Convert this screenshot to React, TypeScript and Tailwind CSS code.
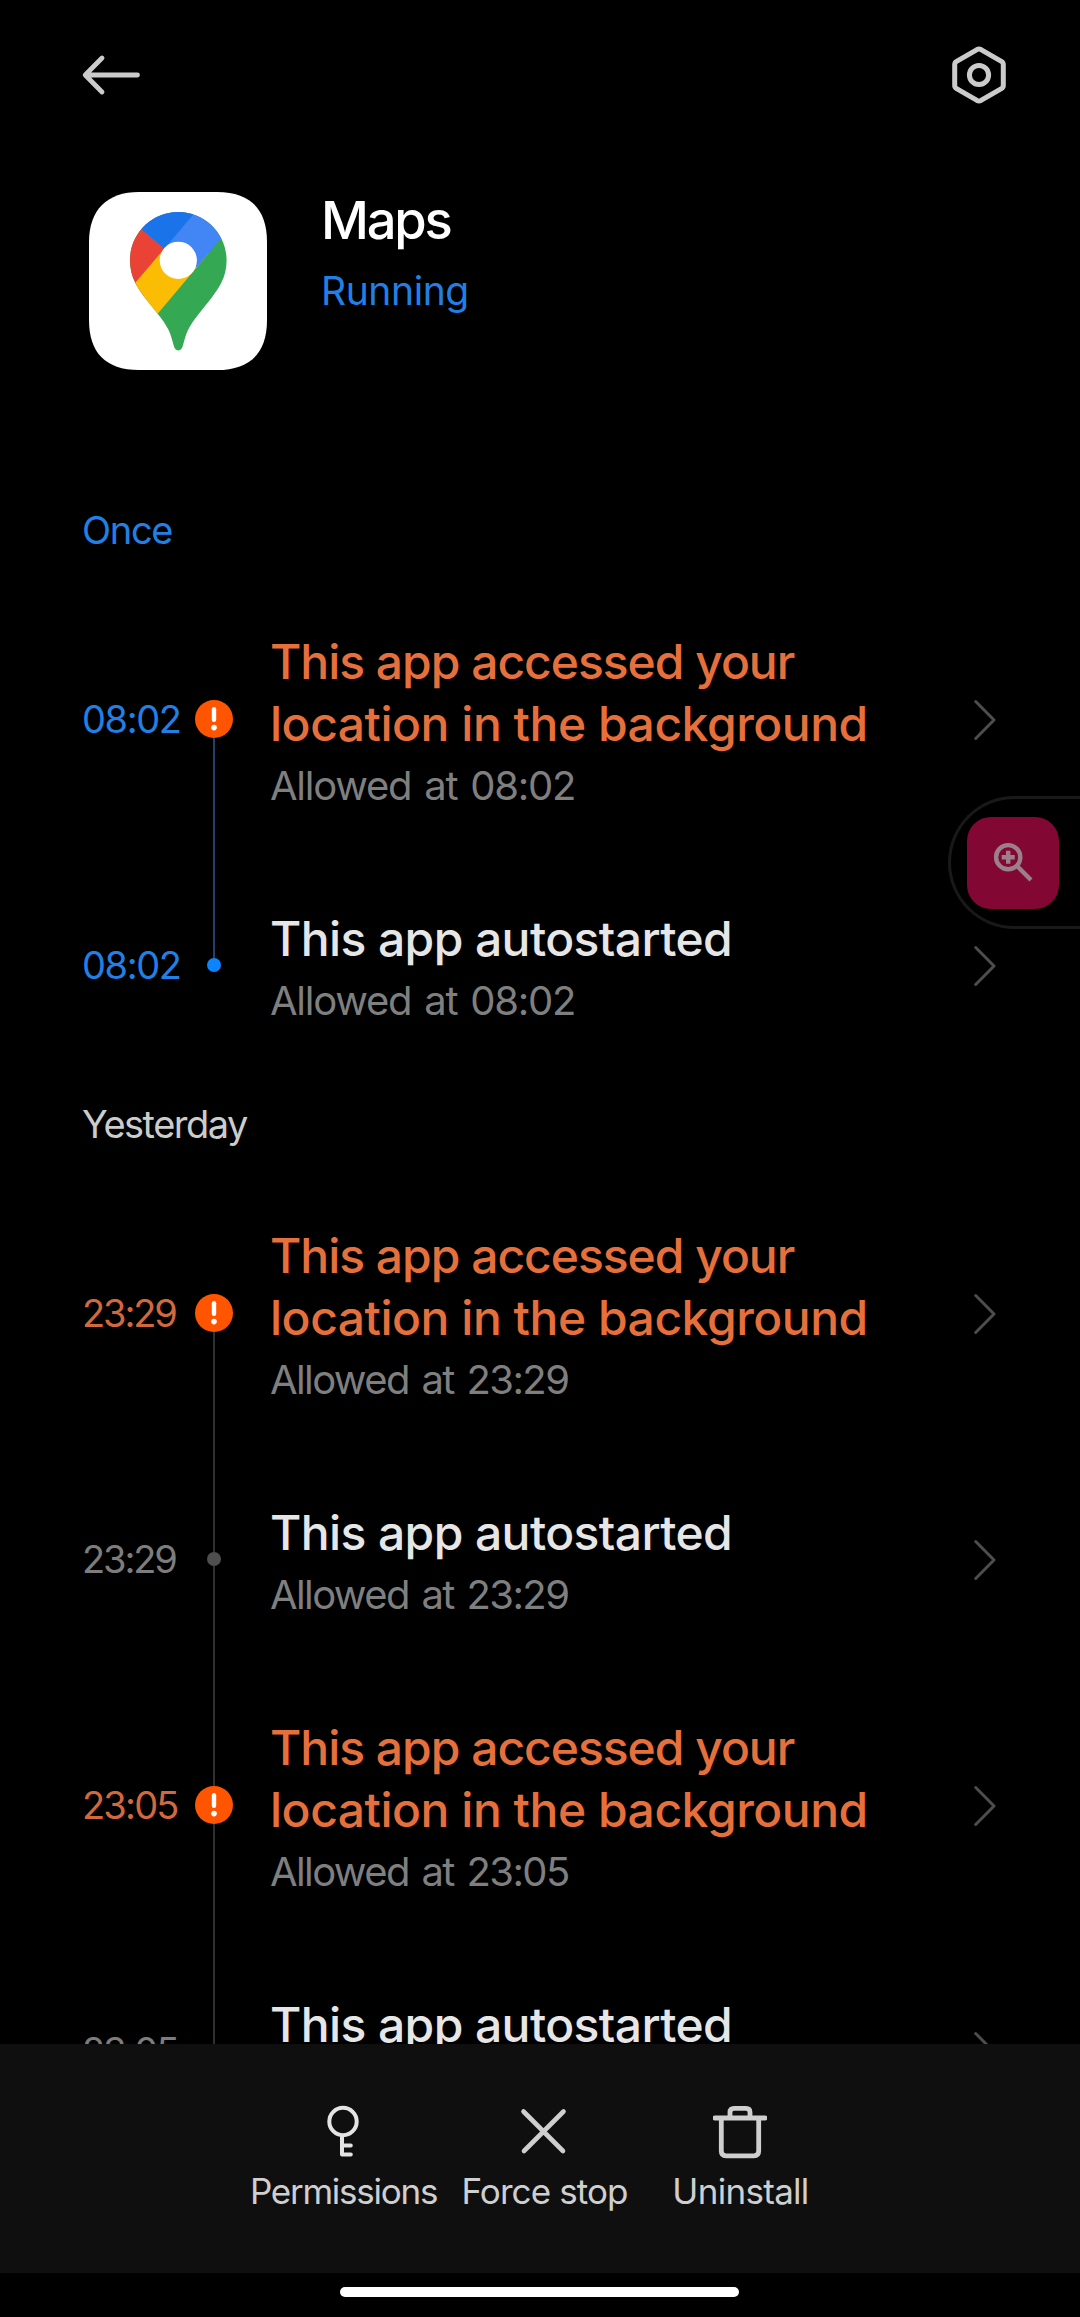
import clsx from "clsx"

type Entry = {
  time: string
  kind: "location" | "autostart"
  tracking: string
}

const today: Entry[] = [
  { time: "08:02", kind: "location", tracking: "tracking-[-1.4px]" },
  { time: "08:02", kind: "autostart", tracking: "tracking-[-1.4px]" },
]

const yesterday: Entry[] = [
  { time: "23:29", kind: "location", tracking: "tracking-[-2.1px]" },
  { time: "23:29", kind: "autostart", tracking: "tracking-[-2.1px]" },
  { time: "23:05", kind: "location", tracking: "tracking-[-1.8px]" },
  { time: "23:05", kind: "autostart", tracking: "tracking-[-1.8px]" },
]

function BackArrow() {
  return (
    <svg viewBox="0 0 60 44" className="w-[60px] h-11" fill="none" stroke="#cbcbcb" strokeWidth="4.8" strokeLinecap="round" strokeLinejoin="round">
      <path d="M22 5 5.2 22 22 39M6 22h51.5" />
    </svg>
  )
}

function SettingsIcon() {
  return (
    <svg viewBox="0 0 60 60" className="w-[60px] h-[60px]" fill="none" stroke="#cbcbcb" strokeWidth="5" strokeLinejoin="round">
      <path d="M28 4.6q2-1 4 0l20.4 11.8q1.9 1.1 1.9 3.2v20.8q0 2.1-1.9 3.2L32 55.4q-2 1-4 0L7.6 43.6q-1.9-1.1-1.9-3.2V19.6q0-2.1 1.9-3.2z" />
      <circle cx="30" cy="30" r="9.6" />
    </svg>
  )
}

function MapsIcon() {
  return (
    <svg viewBox="0 0 178 178" className="w-[178px] h-[178px]">
      <defs>
        <clipPath id="pin">
          <path d="M89.3 20C62.5 20 41 41.7 41 68.3c0 8.4 1.9 16 5.3 22.4 5.5 10.7 13.7 20 22.4 31 4.5 5.7 8.3 11 11 16.6 2.4 5 3.6 10.5 5 15.2.8 2.9 2 4.9 4.6 4.9s3.8-2 4.6-4.9c1.4-4.7 2.6-10.2 5-15.2 2.7-5.6 6.5-10.9 11-16.6 8.7-11 16.9-20.3 22.4-31 3.4-6.4 5.3-14 5.3-22.4C137.6 41.7 116.1 20 89.3 20z" />
        </clipPath>
      </defs>
      <path d="M50 0h78c34 0 50 18 50 50v78c0 34-18 50-50 50H50c-34 0-50-18-50-50V50C0 18 18 0 50 0z" fill="#fff" />
      <g clipPath="url(#pin)">
        <rect x="30" y="10" width="120" height="160" fill="#34a853" />
        <path d="M30 167.3 75.3 56.7 30 18 0 100l30 70z" fill="#ea4335" />
        <path d="M46.3 90.7 75.3 56.7 89.3 68.3 120 60.8 68.7 121.7 50 143.8 20 121.5z" fill="#fbbc04" />
        <path d="M53 37.7 75.3 56.7 89.3 68.3 108 75 131.7 47 150 25.3V0H30v18z" fill="#4285f4" />
        <path d="M53 37.7 75.3 56.7 103.7 23.3 120 4H30v14z" fill="#1a73e8" />
      </g>
      <circle cx="89.3" cy="68.3" r="18.6" fill="#fff" />
    </svg>
  )
}

function AlertBadge() {
  return (
    <svg viewBox="0 0 38 38" className="w-[38px] h-[38px] shrink-0">
      <circle cx="19" cy="19" r="19" fill="#ff5500" />
      <rect x="16.8" y="7" width="4.4" height="15" rx="2.2" fill="#fff" />
      <circle cx="19" cy="27.6" r="2.8" fill="#fff" />
    </svg>
  )
}

function Chevron() {
  return (
    <svg viewBox="0 0 24 42" className="w-6 h-[42px]" fill="none" stroke="#4d4d4d" strokeWidth="3" strokeLinecap="round" strokeLinejoin="round">
      <path d="M2.7 2.5 21 21 2.7 39.5" />
    </svg>
  )
}

function KeyIcon() {
  return (
    <svg viewBox="0 0 54 54" className="w-[54px] h-[54px]" fill="none" stroke="#e4e4e4" strokeWidth="4" strokeLinecap="round" strokeLinejoin="round">
      <circle cx="27" cy="16.5" r="13.7" />
      <path d="M26 31v18.5h8.8M26 40.5h8.8" />
    </svg>
  )
}

function CloseIcon() {
  return (
    <svg viewBox="0 0 54 54" className="w-[54px] h-[54px]" fill="none" stroke="#cfcfcf" strokeWidth="4.6" strokeLinecap="round">
      <path d="M6.5 6.5 46 46M46.5 6.5 7 46" />
    </svg>
  )
}

function TrashIcon() {
  return (
    <svg viewBox="0 0 54 54" className="w-[54px] h-[54px]" fill="none" stroke="#cfcfcf" strokeWidth="4.8" strokeLinecap="round" strokeLinejoin="round">
      <path d="M1.9 13h50.2M17 12.5V7.3q0-4 4-4h12q4 0 4 4v5.2M8.3 14v32q0 4.8 4.8 4.8h27.8q4.8 0 4.8-4.8V14" />
    </svg>
  )
}

function MagnifyIcon() {
  return (
    <svg viewBox="0 0 53 53" className="w-[53px] h-[53px]" fill="none" stroke="#9b8089" strokeWidth="4.4">
      <circle cx="21.2" cy="21.2" r="12.1" />
      <path d="M30 30 44 44M21.2 14.7v13M14.7 21.2h13" />
    </svg>
  )
}

function SectionTitle({ label, className }: { label: string; className: string }) {
  return (
    <h2 className={clsx("h-[102px] text-[38px] leading-[102px] font-[370]", className)}>{label}</h2>
  )
}

function TimelineRow({ entry, isToday, first, last }: { entry: Entry; isToday: boolean; first: boolean; last: boolean }) {
  const alert = entry.kind === "location"
  const line = isToday ? "bg-[#233f6b]" : "bg-[#303030]"

  return (
    <div className="flex shrink-0 items-stretch pl-[82px] pr-[83px]">
      <div
        className={clsx(
          "flex w-[113px] items-center pb-0.5 text-[38px] leading-none font-[370]",
          entry.tracking,
          isToday ? "text-[#2180e6]" : alert ? "text-[#d2693c]" : "text-[#7d7d7d]",
        )}
      >
        {entry.time}
      </div>
      <div className="-mt-px flex w-[38px] flex-col items-center">
        <div className={clsx("w-0.5 flex-1", !first && line)} />
        {alert ? (
          <AlertBadge />
        ) : (
          <div className={clsx("size-3.5 shrink-0 rounded-full", isToday ? "bg-[#0d84ff]" : "bg-[#4f4f4f]")} />
        )}
        <div className={clsx("w-0.5 flex-1", !last && line)} />
      </div>
      <div className="flex-1 pl-[37px] pt-[50px] pb-[41px]">
        {alert ? (
          <h3 className="text-[48px] leading-[62px] font-medium text-[#e5703c]">
            <span className="tracking-[-1.02px]">This app accessed your</span>
            <br />
            <span className="tracking-[-0.48px]">location in the background</span>
          </h3>
        ) : (
          <h3 className="text-[48px] leading-[62px] font-medium tracking-[-0.6px] text-[#e6e6e6]">This app autostarted</h3>
        )}
        <p
          className={clsx(
            "text-[40px] leading-[62px] font-[370] text-[#7f7f7f] [word-spacing:3px]",
            isToday ? "tracking-[-1.25px]" : "tracking-[-1.6px]",
          )}
        >
          Allowed at {entry.time}
        </p>
      </div>
      <div className="flex items-center">
        <Chevron />
      </div>
    </div>
  )
}

function Timeline({ entries, isToday = false }: { entries: Entry[]; isToday?: boolean }) {
  return (
    <div className="flex flex-col">
      {entries.map((entry, idx) => (
        <TimelineRow key={idx} entry={entry} isToday={isToday} first={idx === 0} last={idx === entries.length - 1} />
      ))}
    </div>
  )
}

const actions = [
  { label: "Permissions", icon: <KeyIcon />, className: "w-[201px] tracking-[-1.25px]" },
  { label: "Force stop", icon: <CloseIcon />, className: "w-[201px] tracking-[-0.9px]" },
  { label: "Uninstall", icon: <TrashIcon />, className: "w-[191px] tracking-[-0.7px]" },
]

export default function App() {
  return (
    <div className="relative flex h-[2317px] w-[1080px] flex-col overflow-hidden bg-black font-['Inter',sans-serif]">
      <header className="flex h-[150px] shrink-0 items-center justify-between pl-20 pr-[71px]">
        <BackArrow />
        <SettingsIcon />
      </header>

      <section className="flex h-[329px] shrink-0 pl-[89px] pt-[42px]">
        <MapsIcon />
        <div className="pl-[54px] pt-0.5">
          <h1 className="text-[52.5px] leading-[52px] font-medium tracking-[-2.2px] text-white">Maps</h1>
          <p className="pt-[22px] text-[39px] leading-[46px] font-[370] tracking-[-0.4px] text-[#2180e6]">Running</p>
        </div>
      </section>

      <main className="h-[1565px] shrink-0 overflow-hidden">
        <SectionTitle label="Once" className="pl-[82px] tracking-[-1.3px] text-[#2180e6]" />
        <Timeline entries={today} isToday />
        <SectionTitle label="Yesterday" className="pl-[82px] tracking-[-1.5px] text-[#cccccc]" />
        <Timeline entries={yesterday} />
      </main>

      <nav className="flex h-[229px] shrink-0 items-start bg-[#0f0f0f] pl-[242px] pt-[61px]">
        {actions.map((action) => (
          <button key={action.label} className={clsx("flex flex-col items-center", action.className)}>
            {action.icon}
            <span className="pt-[7px] pl-0.5 text-[35px] leading-[50px] font-[370] whitespace-nowrap text-[#cfcfcf]">{action.label}</span>
          </button>
        ))}
      </nav>

      <footer className="flex-1 pl-[340px] pt-3.5">
        <div className="h-2.5 w-[399px] rounded-full bg-white" />
      </footer>

      <aside className="absolute right-[-3px] top-[796px] flex h-[133px] w-[135px] items-center rounded-l-[67px] border-[3px] border-r-0 border-[#191919] bg-black pl-4">
        <div className="flex size-[92px] items-center justify-center rounded-[24px] bg-[#820733]">
          <MagnifyIcon />
        </div>
      </aside>
    </div>
  )
}
